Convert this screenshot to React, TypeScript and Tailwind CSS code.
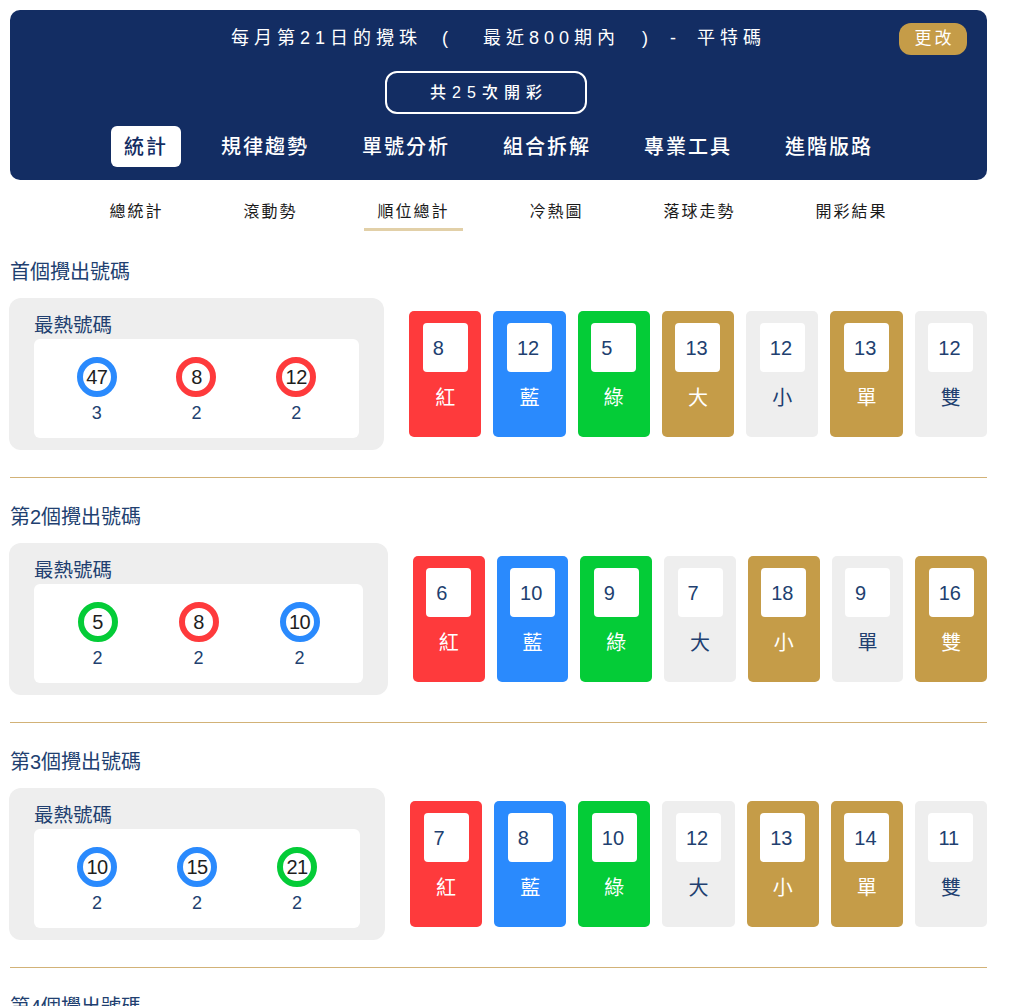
import React from 'react';

type Ball = { n: number; color: 'red' | 'blue' | 'green'; count: number };
type Stat = { value: number; label: string; tone: 'red' | 'blue' | 'green' | 'gold' | 'gray' };

const ringClass = {
  red: 'border-[#fe3a3c]',
  blue: 'border-[#2a8afd]',
  green: 'border-[#04cc37]',
};

const toneClass = {
  red: 'bg-[#fe3a3c] text-white',
  blue: 'bg-[#2a8afd] text-white',
  green: 'bg-[#04cc37] text-white',
  gold: 'bg-[#c59c48] text-white',
  gray: 'bg-[#eeeeee] text-[#213f70]',
};

const sections: { title: string; hotWidth: string; hot: Ball[]; stats: Stat[] }[] = [
  {
    title: '首個攪出號碼',
    hotWidth: 'w-[375px]',
    hot: [
      { n: 47, color: 'blue', count: 3 },
      { n: 8, color: 'red', count: 2 },
      { n: 12, color: 'red', count: 2 },
    ],
    stats: [
      { value: 8, label: '紅', tone: 'red' },
      { value: 12, label: '藍', tone: 'blue' },
      { value: 5, label: '綠', tone: 'green' },
      { value: 13, label: '大', tone: 'gold' },
      { value: 12, label: '小', tone: 'gray' },
      { value: 13, label: '單', tone: 'gold' },
      { value: 12, label: '雙', tone: 'gray' },
    ],
  },
  {
    title: '第2個攪出號碼',
    hotWidth: 'w-[379px]',
    hot: [
      { n: 5, color: 'green', count: 2 },
      { n: 8, color: 'red', count: 2 },
      { n: 10, color: 'blue', count: 2 },
    ],
    stats: [
      { value: 6, label: '紅', tone: 'red' },
      { value: 10, label: '藍', tone: 'blue' },
      { value: 9, label: '綠', tone: 'green' },
      { value: 7, label: '大', tone: 'gray' },
      { value: 18, label: '小', tone: 'gold' },
      { value: 9, label: '單', tone: 'gray' },
      { value: 16, label: '雙', tone: 'gold' },
    ],
  },
  {
    title: '第3個攪出號碼',
    hotWidth: 'w-[376px]',
    hot: [
      { n: 10, color: 'blue', count: 2 },
      { n: 15, color: 'blue', count: 2 },
      { n: 21, color: 'green', count: 2 },
    ],
    stats: [
      { value: 7, label: '紅', tone: 'red' },
      { value: 8, label: '藍', tone: 'blue' },
      { value: 10, label: '綠', tone: 'green' },
      { value: 12, label: '大', tone: 'gray' },
      { value: 13, label: '小', tone: 'gold' },
      { value: 14, label: '單', tone: 'gold' },
      { value: 11, label: '雙', tone: 'gray' },
    ],
  },
];

const mainTabs = ['統計', '規律趨勢', '單號分析', '組合拆解', '專業工具', '進階版路'];
const subTabs = ['總統計', '滾動勢', '順位總計', '冷熱圖', '落球走勢', '開彩結果'];

const Header: React.FC = () => (
  <header className="relative mt-[10px] rounded-[10px] bg-[#132d63] pt-[14px] pb-[13px] text-white">
    <h1 className="flex h-[28px] items-center justify-center text-[18px] leading-[28px] tracking-[5px]">
      <span>每月第21日的攪珠</span>
      <span className="ml-[20px]">(</span>
      <span className="ml-[30px]">最近800期內</span>
      <span className="ml-[22px]">)</span>
      <span className="ml-[17px]">-</span>
      <span className="ml-[16px]">平特碼</span>
    </h1>
    <button className="absolute top-[13px] right-[20px] flex h-[32px] w-[68px] items-center justify-center rounded-[12px] bg-[#c59c48] pl-[3px] text-[17px] tracking-[3px] text-white">
      更改
    </button>
    <div className="mt-[19px] flex justify-center">
      <div className="mr-[25px] flex h-[43px] w-[202px] items-center justify-center rounded-[12px] border-2 border-white pl-[6px] text-[16px] font-medium tracking-[6px]">
        共25次開彩
      </div>
    </div>
    <nav className="mt-[12px] flex justify-center gap-[27px]">
      {mainTabs.map((tab, i) => (
        <div
          key={tab}
          className={
            i === 0
              ? 'flex h-[41px] items-center rounded-[6px] bg-white px-[13px] text-[20px] font-medium tracking-[2px] text-[#132d63]'
              : 'flex h-[41px] items-center px-[13px] text-[20px] font-medium tracking-[2px] text-white'
          }
        >
          {tab}
        </div>
      ))}
    </nav>
  </header>
);

const SubNav: React.FC = () => (
  <nav className="mt-[20px] flex justify-center gap-[54px]">
    {subTabs.map((tab) => (
      <div
        key={tab}
        className={
          tab === '順位總計'
            ? 'border-b-[3px] border-[#e2d0a8] px-[13px] pb-[4px] text-[16px] leading-[24px] tracking-[2px] text-[#1a1a1a]'
            : 'border-b-[3px] border-transparent px-[13px] pb-[4px] text-[16px] leading-[24px] tracking-[2px] text-[#1a1a1a]'
        }
      >
        {tab}
      </div>
    ))}
  </nav>
);

const HotCard: React.FC<{ width: string; balls: Ball[] }> = ({ width, balls }) => (
  <div className={`-ml-px shrink-0 rounded-[12px] bg-[#eeeeee] px-[25px] pt-[13px] pb-[12px] ${width}`}>
    <div className="h-[28px] text-[19.5px] leading-[28px] text-[#213f70]">最熱號碼</div>
    <div className="grid h-[99px] grid-cols-3 rounded-[6px] bg-white px-[13px] pt-[18px]">
      {balls.map((b) => (
        <div key={b.n} className="flex flex-col items-center">
          <div
            className={`flex h-[40px] w-[40px] items-center justify-center rounded-full border-[6px] bg-white text-[20px] tracking-[-0.5px] text-[#1e1e1e] ${ringClass[b.color]}`}
          >
            {b.n}
          </div>
          <div className="mt-[4px] text-[18px] leading-[24px] text-[#213f70]">{b.count}</div>
        </div>
      ))}
    </div>
  </div>
);

const StatBox: React.FC<{ stat: Stat }> = ({ stat }) => (
  <div className={`flex h-[126px] flex-1 flex-col items-center rounded-[5px] pt-[12px] ${toneClass[stat.tone]}`}>
    <div className="flex h-[49px] w-[45px] items-center rounded-[4px] bg-white pl-[10px] text-[20px] text-[#213f70]">
      {stat.value}
    </div>
    <div className="mt-[12px] text-[20px] leading-[28px]">{stat.label}</div>
  </div>
);

export default function App() {
  return (
    <div className="min-h-screen bg-white font-['Liberation_Sans','Noto_Sans_CJK_TC',sans-serif]">
      <div className="ml-[10px] w-[977px] pb-[40px]">
        <Header />
        <SubNav />
        <main className="mt-[27px]">
          {sections.map((s) => (
            <section key={s.title}>
              <h2 className="h-[28px] text-[20px] leading-[28px] text-[#213f70]">{s.title}</h2>
              <div className="mt-[12px] flex h-[152px] items-center">
                <HotCard width={s.hotWidth} balls={s.hot} />
                <div className="ml-[25px] flex flex-1 gap-[12px]">
                  {s.stats.map((st) => (
                    <StatBox key={st.label} stat={st} />
                  ))}
                </div>
              </div>
              <div className="mt-[27px] mb-[25px] h-px bg-[#d2b277]" />
            </section>
          ))}
          <h2 className="h-[28px] text-[20px] leading-[28px] text-[#213f70]">第4個攪出號碼</h2>
        </main>
      </div>
    </div>
  );
}
